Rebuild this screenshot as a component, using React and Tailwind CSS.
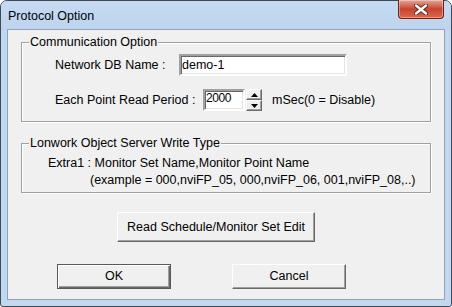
import React from 'react';

function Spin() {
  return (
    <div className="ml-[1px] flex h-[22px] w-[16px] flex-col">
      {['up', 'down'].map((d) => (
        <div
          key={d}
          className="flex h-[11px] w-full items-center justify-center border border-t-white border-l-white border-r-[#696969] border-b-[#696969] bg-[#f0f0f0] shadow-[inset_-1px_-1px_0_#a0a0a0]"
        >
          <svg width="7" height="4" viewBox="0 0 7 4">
            {d === 'up' ? <path d="M3.5 0 L7 4 L0 4 Z" fill="#000" /> : <path d="M0 0 L7 0 L3.5 4 Z" fill="#000" />}
          </svg>
        </div>
      ))}
    </div>
  );
}

function Group({ title, className, children }) {
  return (
    <div className={`relative mx-[13px] border border-[#a0a0a0] shadow-[1px_1px_0_#fff,inset_1px_1px_0_#fff] ${className}`}>
      <span className="absolute -top-[8px] left-[7px] bg-[#f0f0f0] px-[1px] leading-[14px]">{title}</span>
      {children}
    </div>
  );
}

export default function App() {
  const btn =
    'flex items-center justify-center bg-[#f0f0f0] border border-t-white border-l-white border-r-[#696969] border-b-[#696969] shadow-[inset_-1px_-1px_0_#a0a0a0]';

  return (
    <div className="flex h-[307px] w-[452px] flex-col rounded-t-[7px] rounded-b-[3px] border border-[#3d4a5a] bg-[#c2d8f0] font-['Liberation_Sans',Arial,sans-serif] text-[12.5px] text-black">
      {/* title bar */}
      <div className="flex h-[29px] items-start justify-between rounded-t-[6px] bg-gradient-to-b from-[#c6dbf2] to-[#bdd4ee] pl-[7px] pr-[7px]">
        <span className="mt-[8px] leading-[14px]">Protocol Option</span>
        <div className="-mt-[1px] flex h-[19px] w-[46px] items-center justify-center rounded-b-[4px] border border-t-0 border-[#6e2217] bg-gradient-to-b from-[#e6a595] via-[#c6442f] to-[#d9694c] shadow-[inset_0_0_0_1px_rgba(255,255,255,0.35)]">
          <svg width="14" height="11" viewBox="0 0 14 11">
            <path d="M2 1.5 L12 9.5 M12 1.5 L2 9.5" stroke="#5a241b" strokeWidth="4.2" strokeLinecap="round" />
            <path d="M2 1.5 L12 9.5 M12 1.5 L2 9.5" stroke="#fff" strokeWidth="2.4" strokeLinecap="round" />
          </svg>
        </div>
      </div>

      {/* client area */}
      <div className="mx-[7px] flex h-[269px] flex-col bg-[#f0f0f0] shadow-[0_0_0_1px_#8ea3bd]">
        <Group title="Communication Option" className="mt-[12px] h-[80px] pl-[33px] pt-[11px]">
          <div className="flex h-[22px] items-center">
            <span className="w-[124px]">Network DB Name :</span>
            <div className="flex h-[22px] w-[168px] items-center border-2 border-t-[#a0a0a0] border-l-[#a0a0a0] border-r-white border-b-white bg-white pl-[1px] shadow-[inset_1px_1px_0_#696969,inset_-1px_-1px_0_#e3e3e3]">
              demo-1
            </div>
          </div>
          <div className="mt-[13px] flex h-[22px] items-center">
            <span className="w-[148px]">Each Point Read Period :</span>
            <div className="h-[22px] w-[42px] border-2 border-t-[#a0a0a0] border-l-[#a0a0a0] border-r-white border-b-white bg-white pl-[1px] text-[12px] leading-[15px] tracking-[-0.4px] shadow-[inset_1px_1px_0_#696969,inset_-1px_-1px_0_#e3e3e3]">
              2000
            </div>
            <Spin />
            <span className="ml-[10px]">mSec(0 = Disable)</span>
          </div>
        </Group>

        <Group title="Lonwork Object Server Write Type" className="mt-[21px] h-[50px] pt-[11px] leading-[17px]">
          <div className="pl-[26px]">Extra1 : Monitor Set Name,Monitor Point Name</div>
          <div className="pl-[68px]">(example = 000,nviFP_05, 000,nviFP_06, 001,nviFP_08,..)</div>
        </Group>

        <div className={`${btn} ml-[109px] mt-[19px] h-[30px] w-[198px]`}>Read Schedule/Monitor Set Edit</div>

        <div className="mt-[22px] flex">
          <div className="ml-[49px] flex h-[25px] w-[114px] items-center justify-center border border-[#5a5a5a] bg-[#f0f0f0] shadow-[inset_1px_1px_0_#fff,inset_-1px_-1px_0_#696969,inset_-2px_-2px_0_#a0a0a0]">
            OK
          </div>
          <div className={`${btn} ml-[61px] h-[25px] w-[114px]`}>Cancel</div>
        </div>
      </div>
    </div>
  );
}
